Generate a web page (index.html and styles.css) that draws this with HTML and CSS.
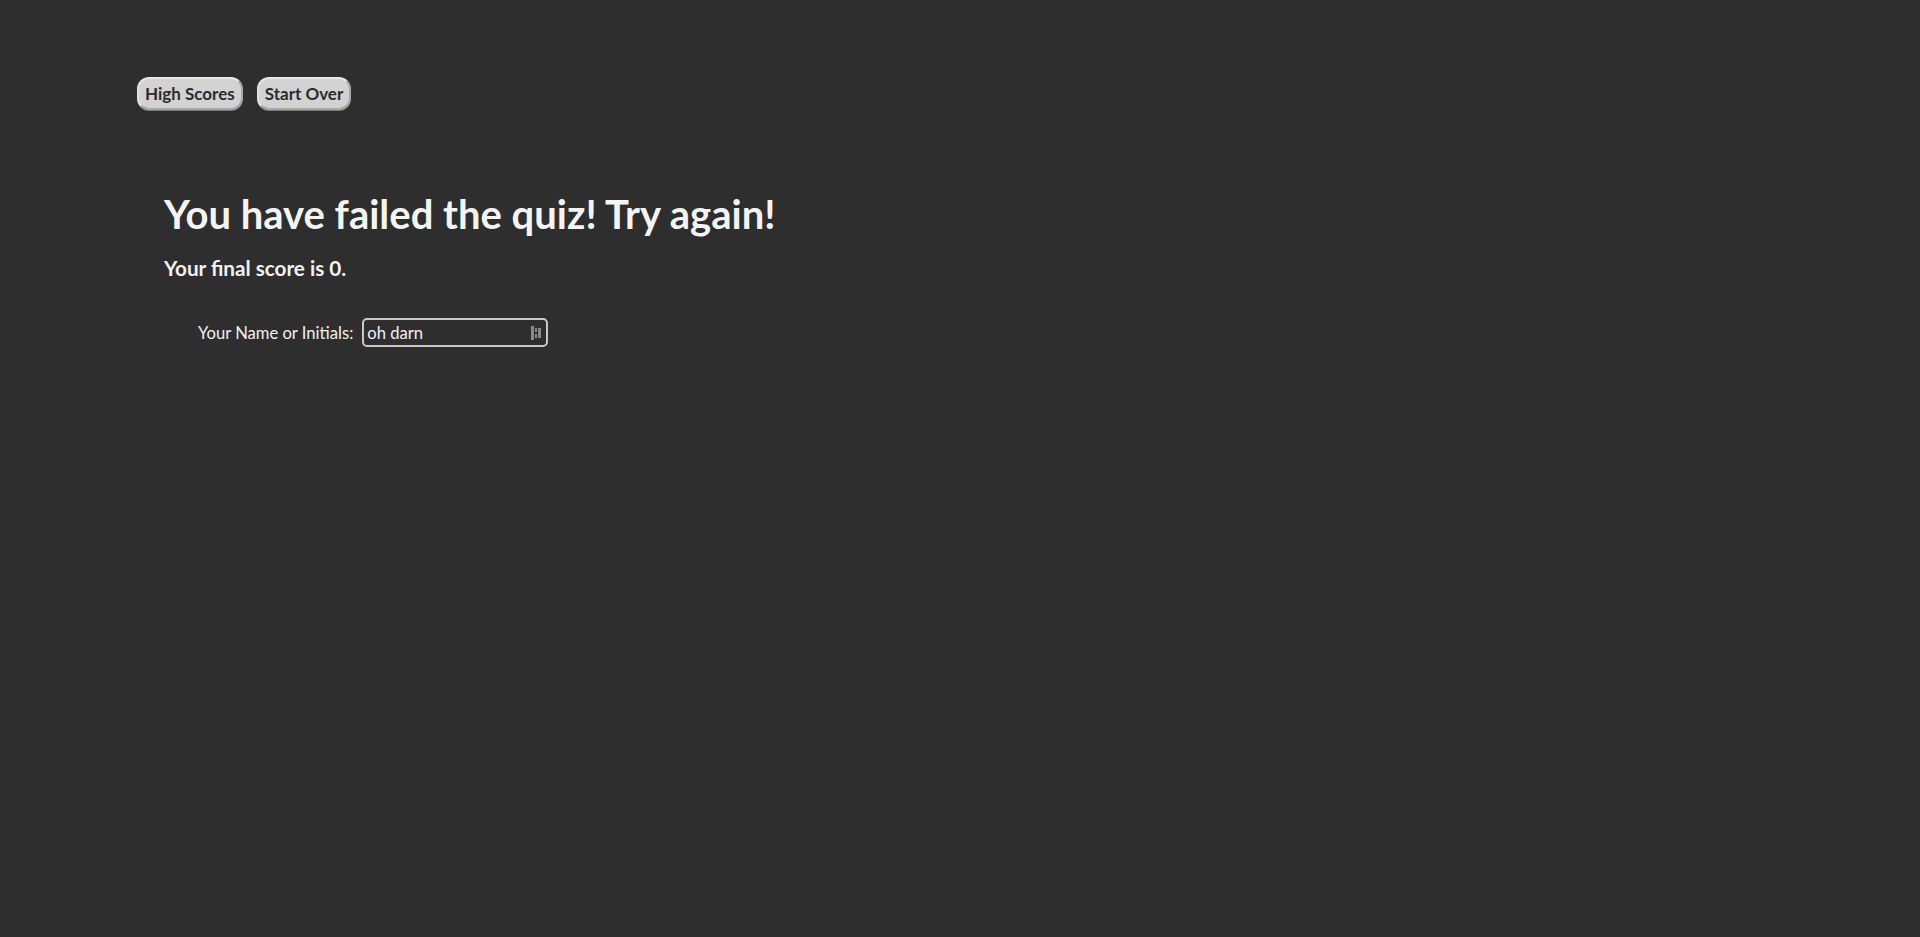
FILE: index.html
```html
<!DOCTYPE html>
<html lang="en">
<head>
<meta charset="utf-8">
<title>Quiz</title>
<link rel="stylesheet" href="styles.css">
</head>
<body>
<header class="topbar">
  <button class="btn">High Scores</button>
  <button class="btn">Start Over</button>
</header>
<main class="content">
  <h1 class="title">You have failed the quiz! Try again!</h1>
  <p class="score">Your final score is 0.</p>
  <form class="name-form">
    <label class="name-label" for="name">Your Name or Initials:</label>
    <span class="field">
      <input id="name" class="name-input" type="text" value="oh darn">
      <svg class="field-icon" width="11" height="14" viewBox="0 0 11 14"><rect x="0" y="0" width="3" height="14" fill="#8a8a8a"/><rect x="4" y="2" width="2" height="4" fill="#8a8a8a"/><rect x="4" y="8" width="2" height="4" fill="#8a8a8a"/><rect x="7" y="2" width="3" height="10" fill="#8a8a8a"/></svg>
    </span>
  </form>
</main>
</body>
</html>
```
FILE: styles.css
```css
html, body {
  margin: 0;
  padding: 0;
  background: #2e2e2e;
  height: 100%;
}
body {
  font-family: "Lato", "Noto Sans", sans-serif;
  color: #f2f2f2;
}
.topbar {
  display: flex;
  gap: 14px;
  padding: 77px 0 0 137px;
}
.btn {
  font-family: inherit;
  font-weight: 700;
  font-size: 17px;
  color: #2b2b2b;
  background: #d2d2d2;
  border: 2px solid #a8a8a8;
  border-top-color: #e8e8e8;
  border-left-color: #e0e0e0;
  border-radius: 12px;
  height: 33px;
  padding: 0 6px;
  box-shadow: 0 1px 0 #777;
  cursor: pointer;
}
.content {
  padding: 0 0 0 164px;
}
.title {
  margin: 0;
  padding-top: 80px;
  font-size: 40px;
  font-weight: 700;
  line-height: 48px;
  color: #f4f4f4;
}
.score {
  margin: 17px 0 0;
  font-size: 20.7px;
  font-weight: 700;
  line-height: 26px;
}
.name-form {
  display: flex;
  align-items: center;
  gap: 9px;
  margin: 37px 0 0 34px;
}
.name-label {
  font-size: 16.6px;
  color: #f0f0f0;
}
.field {
  position: relative;
  display: inline-flex;
}
.name-input {
  width: 186px;
  height: 29px;
  box-sizing: border-box;
  background: #2e2e2e;
  border: 2px solid #c8c8c8;
  border-radius: 5px;
  color: #f2f2f2;
  font-family: inherit;
  font-size: 16.6px;
  padding: 0 22px 0 3px;
  outline: none;
}
.field-icon {
  position: absolute;
  right: 6px;
  top: 8px;
}
```
